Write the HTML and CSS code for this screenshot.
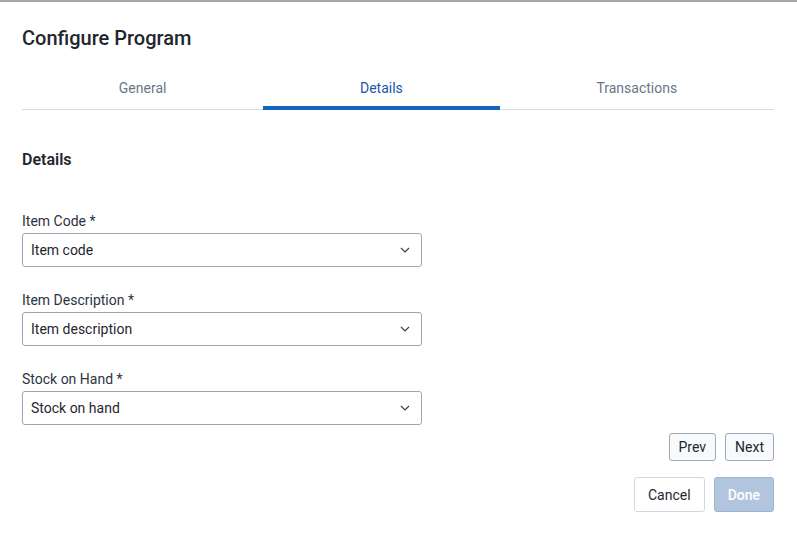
FILE: index.html
```html
<!DOCTYPE html>
<html>
<head>
<meta charset="utf-8">
<link rel="stylesheet" href="styles.css">
</head>
<body>
<div class="dialog">
  <h1 class="title">Configure Program</h1>
  <nav class="tabs">
    <div class="tab">General</div>
    <div class="tab active">Details</div>
    <div class="tab">Transactions</div>
  </nav>
  <h2 class="section">Details</h2>
  <div class="fields">
    <div class="field">
      <label class="label">Item Code *</label>
      <div class="select"><span>Item code</span><svg class="chev" width="10" height="6" viewBox="0 0 10 6"><path d="M1 1l4 4 4-4" fill="none" stroke="#374151" stroke-width="1.2"/></svg></div>
    </div>
    <div class="field">
      <label class="label">Item Description *</label>
      <div class="select"><span>Item description</span><svg class="chev" width="10" height="6" viewBox="0 0 10 6"><path d="M1 1l4 4 4-4" fill="none" stroke="#374151" stroke-width="1.2"/></svg></div>
    </div>
    <div class="field">
      <label class="label">Stock on Hand *</label>
      <div class="select"><span>Stock on hand</span><svg class="chev" width="10" height="6" viewBox="0 0 10 6"><path d="M1 1l4 4 4-4" fill="none" stroke="#374151" stroke-width="1.2"/></svg></div>
    </div>
  </div>
  <div class="pager">
    <button class="btn small">Prev</button>
    <button class="btn small">Next</button>
  </div>
  <div class="actions">
    <button class="btn cancel">Cancel</button>
    <button class="btn done">Done</button>
  </div>
</div>
</body>
</html>
```
FILE: styles.css
```css
* { box-sizing: border-box; }
html, body { margin: 0; padding: 0; background: #fff; }
body {
  font-family: Roboto, "Liberation Sans", sans-serif;
  color: #1f2937;
  border-top: 2px solid #a4a7ab;
}
.dialog {
  padding: 22px 23px 0 22px;
}
.title {
  margin: 0;
  font-size: 20px;
  line-height: 28px;
  font-weight: 500;
  color: #1f2630;
}
.tabs {
  margin-top: 14px;
  display: flex;
  border-bottom: 1px solid #d5dce4;
}
.tab {
  position: relative;
  flex: 1 1 auto;
  height: 43px;
  display: flex;
  align-items: center;
  justify-content: center;
  font-size: 14px;
  color: #6b7684;
}
.tab.active { color: #1a57ad; }
.tab.active::after {
  content: "";
  position: absolute;
  left: 0; right: 0; bottom: -1px;
  height: 4px;
  background: #1565c0;
}
.section {
  margin: 38px 0 0 0;
  font-size: 16px;
  line-height: 24px;
  font-weight: 600;
  color: #1f2630;
}
.fields {
  margin-top: 39px;
  display: flex;
  flex-direction: column;
  gap: 23px;
  width: 400px;
}
.field { display: flex; flex-direction: column; gap: 2px; }
.label {
  font-size: 14px;
  line-height: 20px;
  color: #2d3440;
}
.select {
  height: 34px;
  border: 1px solid #9ba6b2;
  border-radius: 3px;
  display: flex;
  align-items: center;
  justify-content: space-between;
  padding: 0 11px 0 8px;
  font-size: 14px;
  color: #1f2630;
}
.chev { display: block; }
.pager {
  margin-top: 8px;
  display: flex;
  justify-content: flex-end;
  gap: 9px;
}
.actions {
  margin-top: 16px;
  display: flex;
  justify-content: flex-end;
  gap: 9px;
}
.btn {
  font-family: Roboto, "Liberation Sans", sans-serif;
  font-size: 14px;
  border-radius: 3px;
  cursor: pointer;
}
.btn.small {
  height: 28px;
  padding: 0 9px;
  background: #f7f9fb;
  border: 1px solid #9aaabb;
  color: #1f2630;
}
.btn.cancel {
  height: 35px;
  padding: 0 13px;
  background: #fff;
  border: 1px solid #d3d8de;
  color: #1f2630;
}
.btn.done {
  height: 35px;
  padding: 0 13px;
  background: #b2c5de;
  border: 1px solid #9fb3cc;
  color: #fff;
  font-weight: 500;
}
```
